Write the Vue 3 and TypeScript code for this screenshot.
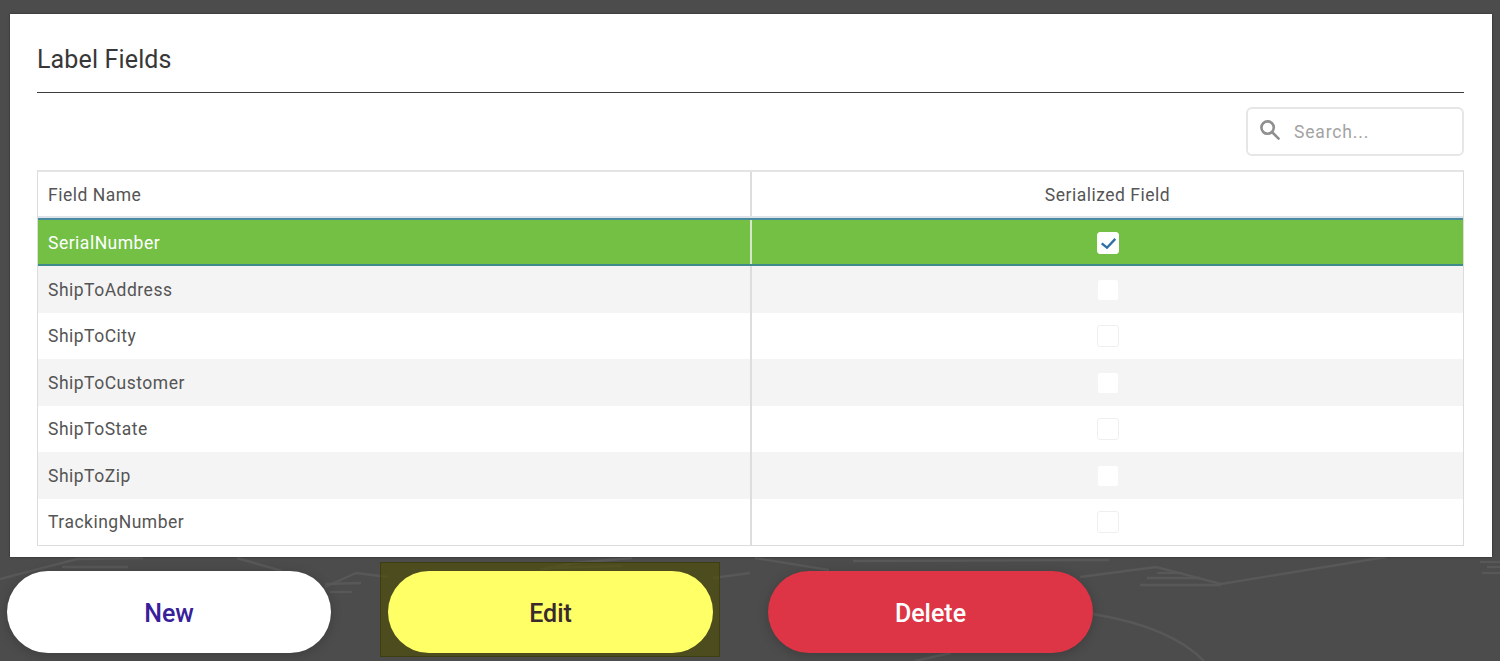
<script setup lang="ts">
interface Row { name: string; checked: boolean; selected: boolean }
const rows: Row[] = [
  { name: 'SerialNumber', checked: true, selected: true },
  { name: 'ShipToAddress', checked: false, selected: false },
  { name: 'ShipToCity', checked: false, selected: false },
  { name: 'ShipToCustomer', checked: false, selected: false },
  { name: 'ShipToState', checked: false, selected: false },
  { name: 'ShipToZip', checked: false, selected: false },
  { name: 'TrackingNumber', checked: false, selected: false },
]
const courtLines: string[] = [
  'M755 558L829 570', 'M853 561L1109 560', 'M1080 577L1156 567L1221 584L1386 557',
  'M1140 585H1221', 'M1147 578H1200', 'M1157 573H1183',
  'M1480 562H1500', 'M1487 567H1500', 'M1482 573H1500',
  'M1093 614Q1171 627 1204 661', 'M915 661L951 653',
  'M0 579L77 559L143 558', 'M62 567H128', 'M237 558L282 571',
  'M325 587L356 573L388 577', 'M325 584L361 583', 'M330 592H352',
  'M540 570L574 563L632 558', 'M545 568L622 566', 'M713 578L750 573',
]
</script>

<template>
  <div class="page">
    <svg class="court" width="1500" height="661" viewBox="0 0 1500 661" fill="none" aria-hidden="true">
      <path v-for="d in courtLines" :key="d" :d="d" stroke="#585858" stroke-width="2.4" />
    </svg>
    <section class="panel">
      <h1 class="title">Label Fields</h1>
      <div class="toolbar">
        <label class="search">
          <svg class="search-icon" width="20" height="20" viewBox="0 0 20 20" fill="none" stroke="#8f8f8f" stroke-width="2.6">
            <circle cx="7.6" cy="7.6" r="6.2" />
            <path d="M12 12L18.6 18.6" stroke-linecap="round" />
          </svg>
          <span class="placeholder">Search...</span>
        </label>
      </div>
      <div class="table">
        <div class="head">
          <div class="cell name">Field Name</div>
          <div class="cell mid">Serialized Field</div>
        </div>
        <div class="body">
          <div v-for="r in rows" :key="r.name" class="row" :class="{ selected: r.selected }">
            <div class="cell name">{{ r.name }}</div>
            <div class="cell mid">
              <span class="check">
                <svg v-if="r.checked" width="20" height="20" viewBox="0 0 20 20" fill="none" stroke="#2f6fa8" stroke-width="2.4">
                  <path d="M3.7 10.3L9 14.7L17.3 5.9" />
                </svg>
              </span>
            </div>
          </div>
        </div>
      </div>
    </section>
    <div class="actions">
      <button class="btn new">New</button>
      <button class="btn edit">
        <span class="glow"></span>
        Edit
      </button>
      <button class="btn del">Delete</button>
    </div>
  </div>
</template>

<style>
html, body { margin: 0; overflow: hidden; background: #4c4c4c; }
</style>

<style scoped>
.page {
  position: relative;
  width: 1500px;
  height: 661px;
  box-sizing: border-box;
  padding: 14px 8px 0 10px;
  overflow: hidden;
  background: #4c4c4c;
  font-family: Roboto, "Liberation Sans", sans-serif;
}
.court { position: absolute; left: 0; top: 0; }
.panel {
  position: relative;
  box-sizing: border-box;
  height: 543px;
  background: #fff;
  padding: 0 28px 0 27px;
  box-shadow: 0 0 2px rgba(0, 0, 0, .5);
}
.title {
  margin: 0;
  height: 79px;
  box-sizing: border-box;
  border-bottom: 1px solid #3c3c3c;
  padding-top: 30px;
  font-size: 25px;
  line-height: 32px;
  font-weight: 400;
  color: #373737;
  letter-spacing: .15px;
}
.toolbar { display: flex; justify-content: flex-end; padding-top: 14px; height: 77px; box-sizing: border-box; }
.search {
  box-sizing: border-box;
  width: 218px;
  height: 49px;
  margin-top: -.5px;
  border: 2px solid #e6e6e6;
  border-radius: 6px;
  display: flex;
  align-items: center;
  padding-left: 12px;
  gap: 14px;
}
.search-icon { flex: none; margin-top: -2px; }
.placeholder { font-size: 17.5px; color: #a3a3a3; letter-spacing: .85px; padding-top: 2px; }
.table {
  box-sizing: border-box;
  height: 376px;
  border: 1px solid #dcdcdc;
  border-top: 2px solid #e4e4e4;
  font-size: 17.5px;
  letter-spacing: .5px;
  color: #555;
}
.head { display: flex; height: 46px; border-bottom: 2px solid #dde3e8; box-sizing: border-box; }
.body { display: flex; flex-direction: column; height: 327px; }
.row { flex: 1; display: flex; background: #fff; }
.row:nth-child(even) { background: #f4f4f4; }
.row.selected {
  flex: none;
  height: 48px;
  box-sizing: border-box;
  background: #73c045;
  color: #fff;
  border-top: 2px solid #4a8aa0;
  border-bottom: 2px solid #3f8a8c;
}
.cell { display: flex; align-items: center; box-sizing: border-box; padding-top: 1px; }
.name { width: 714px; flex: none; padding-left: 10px; border-right: 2px solid #dddddd; }
.selected .name { border-right-color: #d6e8c8; }
.mid { flex: 1; justify-content: center; }
.check {
  box-sizing: border-box;
  width: 22px;
  height: 22px;
  background: #fff;
  border: 1px solid #efefef;
  border-radius: 3px;
  display: flex;
  align-items: center;
  justify-content: center;
}
.row:nth-child(even) .check { border-color: #f4f4f4; }
.row.selected .check { border-color: #fff; }
.actions {
  position: relative;
  z-index: 0;
  display: flex;
  margin: 14px 0 0 -3px;
}
.btn {
  position: relative;
  box-sizing: border-box;
  width: 325px;
  height: 82px;
  border: 0;
  border-radius: 41px;
  font-family: inherit;
  font-size: 25px;
  font-weight: 500;
  padding: 3px 0 0;
  box-shadow: 0 2px 12px rgba(0, 0, 0, .2);
}
.new { width: 324px; background: #fff; color: #37209a; }
.edit { background: #ffff66; color: #3a2a2e; margin-left: 57px; box-shadow: none; }
.del { background: #dd3545; color: #fff; margin-left: 55px; }
.glow {
  position: absolute;
  left: -8px;
  top: -9px;
  z-index: -1;
  width: 340px;
  height: 95px;
  box-sizing: border-box;
  background: rgba(76, 76, 0, .6);
  border: 1px solid #3e3e10;
  pointer-events: none;
}
</style>
